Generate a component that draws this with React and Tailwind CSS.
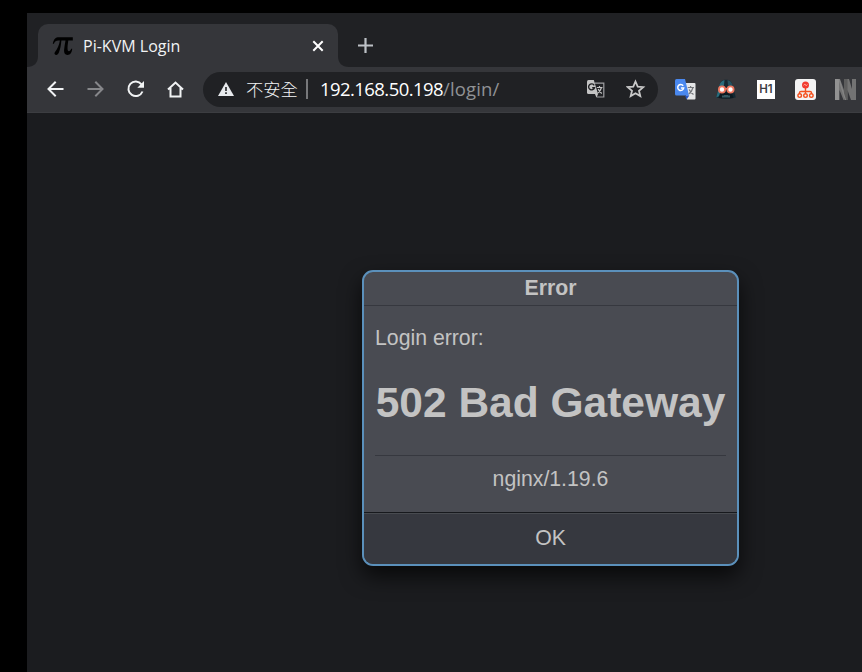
import React from "react";

const uiFont = "font-['Open_Sans','Noto_Sans_CJK_TC',sans-serif]";

function PiIcon() {
  return (
    <svg width="22" height="20" viewBox="0 0 22 20" className="ml-[14px] shrink-0" fill="#000">
      <path d="M.8 7.800C1.800 3 3.500 1.300 7 1.300H20.800V4.500H16.300C15.700 8.500 15.400 11 15.600 13.500C15.800 16 18.300 15.700 19.200 12.800H20.200C20 16.500 18.300 18.900 15.600 18.900C12.800 18.900 11.900 16.800 12.100 13.800C12.300 10.800 13 7.500 13.500 4.500H9.400C9 9 8.300 13 6.900 16.600C6.200 18.500 5.200 19 4 18.900C2.400 18.700 2 17.300 3 16C5.500 12.800 7.200 9 7.900 4.500H6.500C4 4.500 2.800 5.500 1.900 7.800Z" />
    </svg>
  );
}

function Tab() {
  return (
    <div className="flex h-[43px] w-[300px] items-center rounded-t-[10px] bg-[#35363a]">
      <PiIcon />
      <span className={`ml-[9px] w-[200px] whitespace-nowrap text-[16px] leading-[22px] tracking-[0.020px] text-[#f1f3f4] ${uiFont}`}>Pi-KVM Login</span>
      <svg width="12" height="12" viewBox="0 0 12 12" className="ml-[29px] shrink-0" stroke="#fff" strokeWidth="2">
        <path d="M1.300 1.300L10.700 10.700M10.700 1.300L1.300 10.700" />
      </svg>
    </div>
  );
}

function TabStrip() {
  return (
    <div className="flex h-[54px] items-end bg-[#202124]">
      <svg width="11" height="11" viewBox="0 0 11 11" className="shrink-0">
        <path d="M0 11C7 11 11 7 11 0V11Z" fill="#35363a" />
      </svg>
      <Tab />
      <svg width="11" height="11" viewBox="0 0 11 11" className="shrink-0">
        <path d="M11 11C4 11 0 7 0 0V11Z" fill="#35363a" />
      </svg>
      <svg width="15" height="15" viewBox="0 0 15 15" className="mb-[14px] ml-[9px] shrink-0" stroke="#bdc1c6" strokeWidth="2.200">
        <path d="M7.500 0V15M0 7.500H15" />
      </svg>
    </div>
  );
}

function NavButtons() {
  return (
    <div className="flex w-[176px] shrink-0 items-center gap-[20px] pl-[18px]">
      <svg width="20" height="20" viewBox="0 0 20 20" fill="none" stroke="#f1f3f4" strokeWidth="2">
        <path d="M18.500 10H3.500M10.700 2.800L3.500 10L10.700 17.200" />
      </svg>
      <svg width="20" height="20" viewBox="0 0 20 20" fill="none" stroke="#86878a" strokeWidth="2">
        <path d="M2.500 10H17.500M10.300 2.800L17.500 10L10.300 17.200" />
      </svg>
      <svg width="20" height="20" viewBox="0 0 20 20" fill="none" stroke="#f1f3f4" strokeWidth="2">
        <path d="M16.500 5.300A7.300 7.300 0 1 0 17.500 12.500" />
        <path d="M19 2V8.700H12.300Z" fill="#f1f3f4" stroke="none" />
      </svg>
      <svg width="20" height="20" viewBox="0 0 20 20" fill="none" stroke="#f1f3f4" strokeWidth="2">
        <path d="M3 10.500L10.500 3.500L18 10.500M5.500 9V17.500H15.500V9" />
      </svg>
    </div>
  );
}

function PageTranslateIcon() {
  return (
    <svg width="18" height="18" viewBox="0 0 18 18" className="shrink-0">
      <path d="M7.500 3.200H16.800V17H10" fill="none" stroke="#9fa0a2" strokeWidth="1.200" />
      <path d="M0 1.500Q0 0 1.500 0H6.800L11 14H1.500Q0 14 0 12.500Z" fill="#c4c4c4" />
      <path d="M8 14H11L9.500 17.800Z" fill="#c4c4c4" />
      <path d="M7.200 5.300A3 3 0 1 0 7.500 7.800H5.200" fill="none" stroke="#202124" strokeWidth="1.400" />
      <path d="M9.800 7.500H15.500M12.500 6V7.500M14.500 7.500Q13.500 11 10.800 13M11.200 9Q12.500 12 14.800 13.500" fill="none" stroke="#c4c4c4" strokeWidth="1.200" />
    </svg>
  );
}

function Omnibox() {
  return (
    <div className="flex h-[35px] w-[455px] shrink-0 items-center rounded-full bg-[#202124]">
      <svg width="16" height="14" viewBox="0 0 16 14" className="ml-[15px] shrink-0">
        <path d="M8 0L16 14H0Z" fill="#e8eaed" />
        <path d="M7.200 5H8.800V9H7.200ZM7.200 10.300H8.800V12H7.200Z" fill="#202124" />
      </svg>
      <span className="ml-[12px] w-[52px] whitespace-nowrap font-['Noto_Sans_CJK_TC',sans-serif] text-[17.300px] leading-[24px] font-light text-[#f1f3f4]">不安全</span>
      <span className="ml-[8px] h-[20px] w-[2px] bg-[#77787b]" />
      <span className={`ml-[12px] w-[240px] whitespace-nowrap text-[18.500px] leading-[26px] tracking-[-0.570px] text-white ${uiFont}`}>
        192.168.50.198<span className="tracking-[0.140px] text-[#909295]">/login/</span>
      </span>
      <div className="ml-[27px] flex items-center gap-[21px]">
        <PageTranslateIcon />
        <svg width="20" height="20" viewBox="0 0 20 20" fill="none" stroke="#c8c8c8" strokeWidth="1.800">
          <path d="M9.500 2.500L11.700 7.600L17.200 8.100L13 11.700L14.300 17.100L9.500 14.200L4.700 17.100L6 11.700L1.800 8.100L7.300 7.600Z" />
        </svg>
      </div>
    </div>
  );
}

function Extensions() {
  return (
    <div className="flex min-w-0 items-center pl-[17px]">
      <svg width="21" height="21" viewBox="0 0 21 21" className="shrink-0">
        <path d="M8 4H19.500Q20.500 4 20.500 5V19.500Q20.500 20.500 19.500 20.500H12Z" fill="#e4e5e6" />
        <path d="M1.500 0H10L14 16.500H1.500Q0 16.500 0 15V1.500Q0 0 1.500 0Z" fill="#4a88ee" />
        <path d="M10 16.500H14.300L11.600 20.500Z" fill="#2857c2" />
        <path d="M8.200 6.800A3 3 0 1 0 8.700 9H5.900" fill="none" stroke="#fff" strokeWidth="1.500" />
        <path d="M12.800 8.500H19M15.600 7V8.500M18 8.500Q17 12.500 13.800 15M14.200 10.500Q15.500 13.500 18.500 15.500" fill="none" stroke="#74777b" strokeWidth="1.200" />
      </svg>
      <svg width="20" height="20" viewBox="0 0 20 20" className="ml-[20px] shrink-0">
        <path d="M10 .8C14.500 .8 16.300 3.500 17 8L19.800 18.500Q10 20.500 .2 18.500L3 8C3.700 3.500 5.500 .8 10 .8Z" fill="#152832" />
        <path d="M8.500 1C5 1.800 3.700 4.500 3 8L.2 18.500L3.500 17L5 12L8 6Z" fill="#286c7c" />
        <path d="M11.500 1C15 1.800 16.300 4.500 16.800 7.500L12 6.500Z" fill="#24515e" />
        <path d="M4.500 13H15.500L17.500 19Q10 20 2.500 19Z" fill="#0c1a22" />
        <circle cx="6" cy="10.500" r="3.100" fill="#fff" stroke="#ed765e" strokeWidth="1.800" />
        <circle cx="14.500" cy="10.500" r="3.100" fill="#fff" stroke="#ed765e" strokeWidth="1.800" />
        <path d="M9 9.700H11.400" stroke="#ed765e" strokeWidth="1.500" />
        <path d="M7 16.500V18.500M9 16V18.500M11 16V18.500M13 16.500V18.500" stroke="#6ba6b2" strokeWidth=".9" />
      </svg>
      <div className="ml-[21px] flex h-[19px] w-[18px] shrink-0 items-center justify-center bg-white pt-[2px] font-['Inter',sans-serif] text-[11.500px] leading-none font-semibold text-[#3b3e44]">H1</div>
      <svg width="21" height="21" viewBox="0 0 21 21" className="ml-[20px] shrink-0">
        <rect width="21" height="21" rx="3" fill="#f3f3f3" />
        <g fill="none" stroke="#f4511e" strokeWidth="1.400">
          <path d="M10.500 8V14M4.500 15V13.500Q4.500 12.500 6 12.500H15Q16.500 12.500 16.500 13.500V15" />
          <circle cx="4.700" cy="16.600" r="1.800" />
          <circle cx="10.500" cy="16.600" r="1.800" />
          <circle cx="16.300" cy="16.600" r="1.800" />
        </g>
        <circle cx="10.500" cy="6" r="3.500" fill="#f23b30" />
        <path d="M8.500 6.300L10 5L11 6.800L12.500 5.500" stroke="#ff9f8e" fill="none" />
      </svg>
      <svg width="21" height="21" viewBox="0 0 21 21" className="ml-[19px] shrink-0">
        <path d="M0 0H5L9 11V0H14L17 10V0H21V21H16L12.500 11V21H8.500L4.500 11V21H0Z" fill="#737373" />
        <path d="M0 0H4V21H0Z" fill="#929292" />
        <path d="M9 0H12.500V21H9Z" fill="#5d5d5d" />
        <path d="M4 0L10.500 21" stroke="#858585" strokeWidth="1.200" />
      </svg>
    </div>
  );
}

function ErrorDialog() {
  return (
    <div className="mt-[157px] ml-[335px] flex h-[296px] w-[377px] flex-col overflow-hidden rounded-[11px] border-2 border-[#5b90bb] bg-[#494b52] font-['Liberation_Sans',Arial,sans-serif] text-[21.250px] text-[#c3c3c3] shadow-[0_10px_21px_rgba(0,0,0,0.700)]">
      <div className="flex h-[34px] shrink-0 items-center justify-center border-b border-[#36383f] pb-[1px] leading-[32px] font-bold">Error</div>
      <div className="flex h-[206px] shrink-0 flex-col px-[11px]">
        <p className="mt-[20px] leading-[24px]">Login error:</p>
        <h1 className="mt-[29px] text-center text-[42.500px] leading-[48px] font-bold whitespace-nowrap">502 Bad Gateway</h1>
        <hr className="mt-[28px] border-[#36383f]" />
        <p className="mt-[11px] text-center leading-[24px]">nginx/1.19.6</p>
      </div>
      <button className="flex-1 border-t border-[#17191d] bg-[#36383f] text-center shadow-[inset_0_1px_0_#484b50]">OK</button>
    </div>
  );
}

export default function App() {
  return (
    <div className="flex h-[672px] w-[862px] flex-col overflow-hidden bg-black pt-[13px] pl-[27px]">
      <TabStrip />
      <div className="flex h-[45px] shrink-0 items-center bg-[#35363a] pb-[1px]">
        <NavButtons />
        <Omnibox />
        <Extensions />
      </div>
      <main className="flex-1 border-t border-[#3c3d41] bg-[#1b1c1f]">
        <ErrorDialog />
      </main>
    </div>
  );
}
